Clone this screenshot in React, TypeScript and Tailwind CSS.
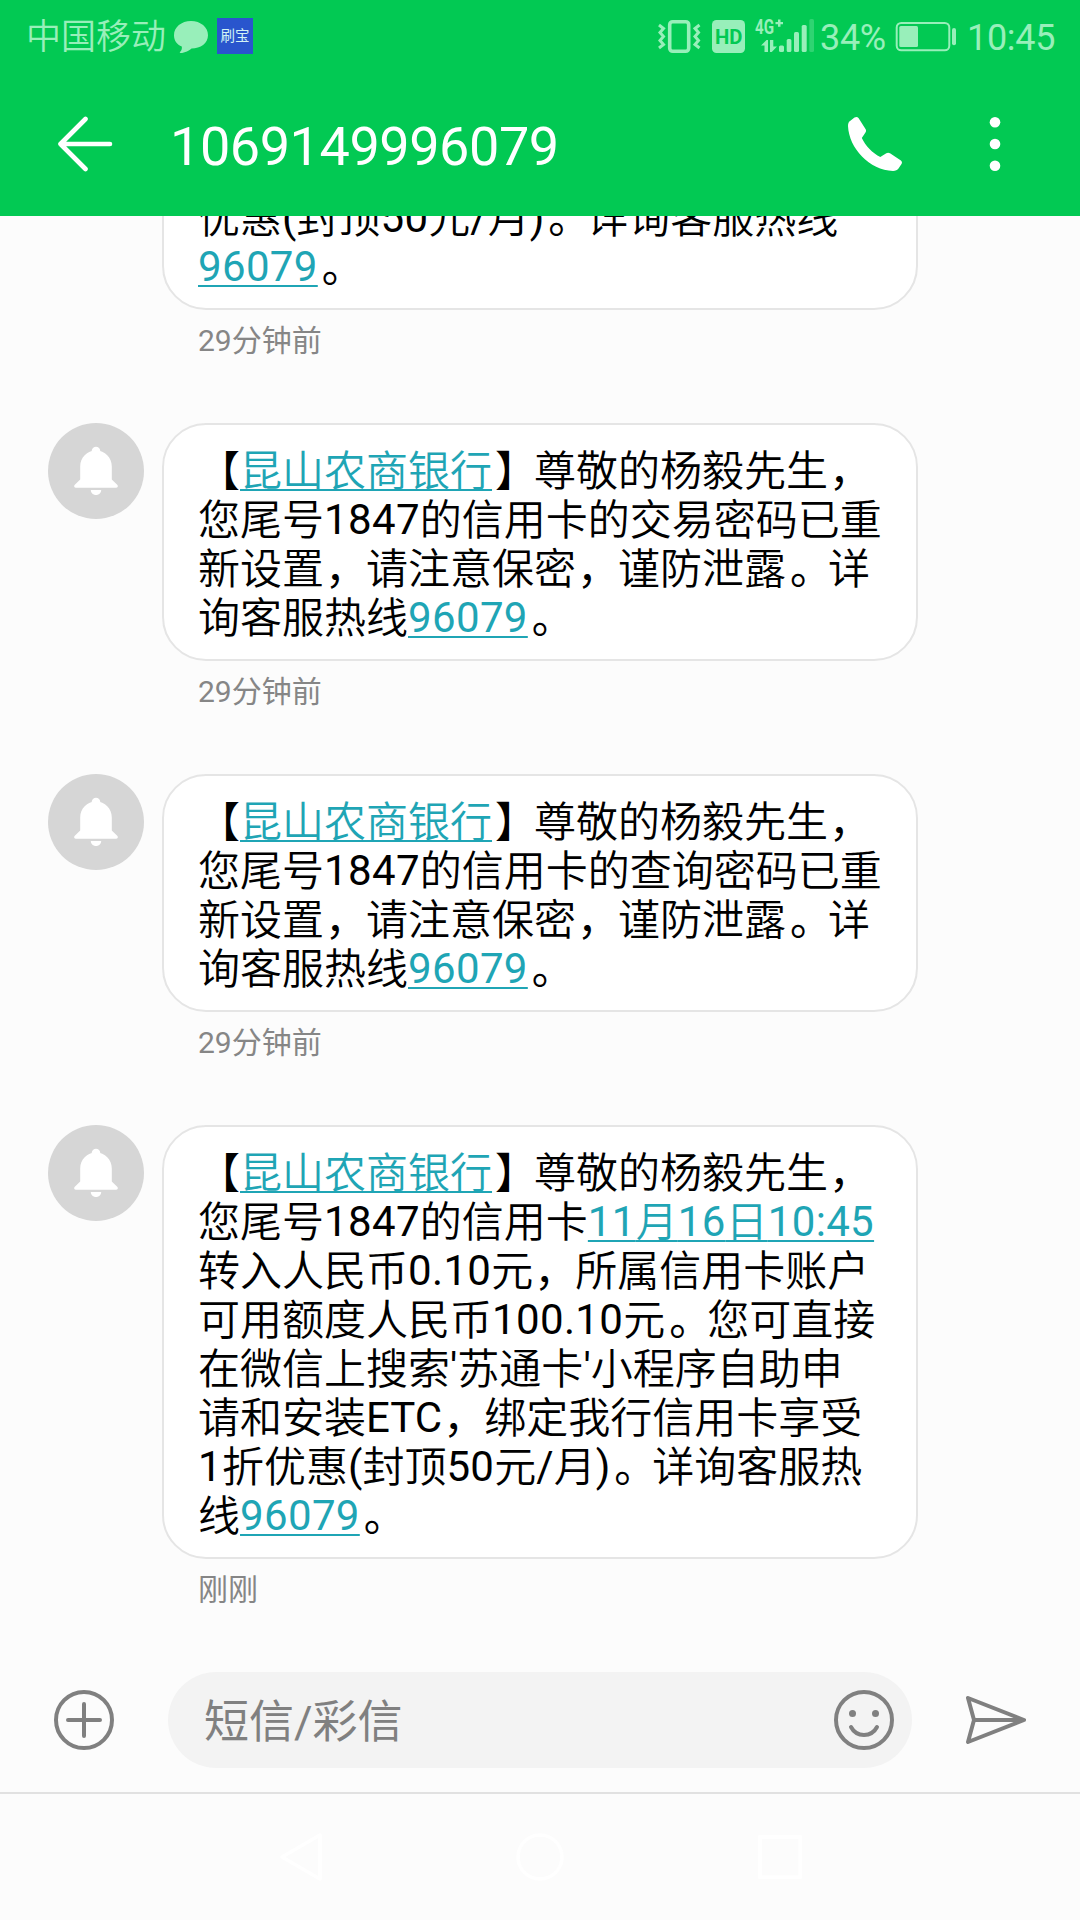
import React from "react";

type Segment = string | { link: string };
type Message = { lines: Segment[][]; time: string; avatar: boolean };

const BANK: Segment[] = ["【", { link: "昆山农商银行" }, "】尊敬的杨毅先生，"];

const MESSAGES: Message[] = [
  {
    avatar: false,
    time: "29分钟前",
    lines: [["优惠(封顶50元/月)。详询客服热线"], [{ link: "96079" }, "。"]],
  },
  {
    avatar: true,
    time: "29分钟前",
    lines: [
      BANK,
      ["您尾号1847的信用卡的交易密码已重"],
      ["新设置，请注意保密，谨防泄露。详"],
      ["询客服热线", { link: "96079" }, "。"],
    ],
  },
  {
    avatar: true,
    time: "29分钟前",
    lines: [
      BANK,
      ["您尾号1847的信用卡的查询密码已重"],
      ["新设置，请注意保密，谨防泄露。详"],
      ["询客服热线", { link: "96079" }, "。"],
    ],
  },
  {
    avatar: true,
    time: "刚刚",
    lines: [
      BANK,
      ["您尾号1847的信用卡", { link: "11月16日10:45" }],
      ["转入人民币0.10元，所属信用卡账户"],
      ["可用额度人民币100.10元。您可直接"],
      ["在微信上搜索'苏通卡'小程序自助申"],
      ["请和安装ETC，绑定我行信用卡享受"],
      ["1折优惠(封顶50元/月)。详询客服热"],
      ["线", { link: "96079" }, "。"],
    ],
  },
];

/** Splits a run so that digits, ideographs and full-width punctuation get their own spacing. */
function Run({ text }: { text: string }) {
  const parts = text.split(/([0-9.:]+|[，。】【]|[A-Z()'/]+)/).filter(Boolean);
  return (
    <>
      {parts.map((p, i) => {
        if (/^[0-9.:]+$/.test(p)) {
          return (
            <span key={i} className="tracking-[0.35px]">
              {p}
            </span>
          );
        }
        if (/^[A-Z()'/]+$/.test(p)) {
          return <React.Fragment key={i}>{p}</React.Fragment>;
        }
        if (p === "。") {
          return (
            <span key={i} className="inline-block w-[42px] pl-[4px] align-[-1px] leading-[48px]">
              {p}
            </span>
          );
        }
        if (p === "，") {
          return (
            <span key={i} className="inline-block w-[42px] pl-[1px] align-[-1px] leading-[48px]">
              {p}
            </span>
          );
        }
        if (p === "】") {
          return (
            <span key={i} className="inline-block w-[42px] pl-[3px] align-[-1px] leading-[48px]">
              {p}
            </span>
          );
        }
        return (
          <span key={i} className="align-[-1px] leading-[48px] font-[350]">
            {p}
          </span>
        );
      })}
    </>
  );
}

function Avatar() {
  return (
    <svg viewBox="0 0 96 96" className="size-24 shrink-0">
      <circle cx="48" cy="48" r="48" fill="#d6d6d6" />
      <g fill="#fff">
        <circle cx="48" cy="28" r="4.3" />
        <path d="M48 27.500c9 0 15.800 7 15.800 16V56.500l5.400 5.200c1.300 1.300.6 3-1.200 3H28c-1.800 0-2.500-1.700-1.200-3l5.400-5.200V43.500c0-9 6.800-16 15.800-16z" />
        <path d="M42.800 67h10.400c0 2.800-2.200 5-5.200 5s-5.200-2.200-5.200-5z" />
      </g>
    </svg>
  );
}

function MessageItem({ message }: { message: Message }) {
  return (
    <div className="flex shrink-0 items-start pl-12">
      <div className="w-[114px] shrink-0">{message.avatar && <Avatar />}</div>
      <div className="w-[756px]">
        <div className="rounded-[44px] border-2 border-[#e5e5e5] bg-white pt-[21px] pb-[17px] pl-[34px] text-[42px] leading-[49px] text-black">
          {message.lines.map((line, i) => (
            <div key={i} className="h-[49px] whitespace-nowrap">
              {line.map((seg, j) =>
                typeof seg === "string" ? (
                  <Run key={j} text={seg} />
                ) : (
                  <a
                    key={j}
                    className="text-[#1fa5b5] underline decoration-2 underline-offset-4 [text-decoration-skip-ink:none]"
                  >
                    <Run text={seg.link} />
                  </a>
                ),
              )}
            </div>
          ))}
        </div>
        <div className="h-[113px] pt-[13px] pl-9 text-[30px] leading-9 text-[#868686]">{message.time}</div>
      </div>
    </div>
  );
}

function StatusIcons() {
  return (
    <svg viewBox="656 0 160 72" className="h-[72px] w-[160px]" fill="#98efba">
      <g fill="none" stroke="#98efba">
        <rect x="669.700" y="21.700" width="19" height="29.600" rx="3" strokeWidth="3.600" />
        <path d="M659 25l4.500 3.500-3.500 4 3.500 4-3.500 4 3.500 4-4.500 3.500" strokeWidth="3" />
        <path d="M699.500 25l-4.500 3.500 3.500 4-3.500 4 3.500 4-3.500 4 4.500 3.500" strokeWidth="3" />
      </g>
      <rect x="712" y="20" width="33" height="33" rx="4.500" />
      <text x="715" y="44" fontSize="21" fontWeight="700" fill="#02c953" textLength="27.500" lengthAdjust="spacingAndGlyphs">
        HD
      </text>
      <text x="755" y="33.500" fontSize="20" fontWeight="700" textLength="19" lengthAdjust="spacingAndGlyphs">
        4G
      </text>
      <path d="M778 19.500h2.500v2.500h2.500v2.300h-2.500v2.500H778v-2.500h-2.500V22h2.500z" />
      <path d="M761 45.500l5.500-5.500h1.500v12h-3.500v-6.500zM770 40h3.300v6.500h3.700l-5.200 5.500H770z" />
      <rect x="779" y="45.500" width="5" height="6.500" rx="1.500" />
      <rect x="786.700" y="39" width="4.700" height="13" rx="1.500" />
      <rect x="794" y="32" width="5" height="20" rx="1.500" />
      <rect x="801.700" y="25" width="5" height="27" rx="1.500" />
      <rect x="809.300" y="19" width="4.700" height="33" rx="1.500" opacity="0.300" />
    </svg>
  );
}

function StatusBar() {
  return (
    <div className="flex h-[72px] items-start text-[36px] leading-[76px] text-[#98efba]">
      <span className="ml-[26px] w-[148px] text-[35px] font-[350]">中国移动</span>
      <svg viewBox="0 0 34 34" className="mt-5 h-[34px] w-[34px]" fill="#98efba">
        <path d="M17 1c9.600 0 17 6.200 17 14.200S26.600 28.500 17.500 28.500c-2 2-6.500 4.500-11 4.500-1-.2-1-.8-.3-1.300 1.300-1.100 2-3.200 1.600-5.200C3 24.500 0 20.500 0 15.200 0 7.200 7.400 1 17 1z" />
      </svg>
      <span className="mt-[18px] ml-[9px] size-9 bg-[#2955cd] text-center text-[14.500px] leading-[38px] text-[#d3f3f4]">刷宝</span>
      <div className="ml-[403px]">
        <StatusIcons />
      </div>
      <span className="ml-[4px] w-[75px] tracking-[-0.300px]">34%</span>
      <svg viewBox="895 0 62 72" className="h-[72px] w-[62px]" fill="#98efba">
        <rect x="896.700" y="23" width="52.600" height="27.300" rx="4.500" fill="none" stroke="#98efba" strokeWidth="2" />
        <rect x="899.300" y="26" width="18.700" height="21" rx="1.500" />
        <rect x="952" y="28" width="4" height="17.300" rx="2" />
      </svg>
      <span className="ml-[10px] tracking-[-0.300px]">10:45</span>
    </div>
  );
}

function TitleBar() {
  return (
    <div className="flex h-[144px] items-center text-white">
      <svg viewBox="0 0 56 56" className="ml-[57px] size-14" fill="none" stroke="#fff" strokeWidth="4.600" strokeLinecap="round" strokeLinejoin="round">
        <path d="M53 28H3.500M28.500 3L3.500 28l25 25" />
      </svg>
      <h1 className="ml-[57px] w-[678px] pt-[5px] text-[54px] leading-[72px] tracking-[-0.450px]">1069149996079</h1>
      <svg viewBox="0 0 54 54" className="size-[54px]" fill="#fff">
        <path d="M6.500.6c1.500-.9 3-.8 4 .5l7 10.900c.8 1.300.7 2.500-.2 3.700L13.800 21c3.500 7.500 11 15.500 18.500 19l6-3.800c1.300-.8 2.500-.7 3.700.1l10.900 7.200c1.200.9 1.400 2.100.6 3.400l-3 4.700C49.500 53.300 47.500 54 45 54 21.500 53 1 31.500 0 9c0-2.500.6-4 2-5z" />
      </svg>
      <svg viewBox="0 0 12 54" className="ml-[87px] h-[54px] w-3" fill="#fff">
        <circle cx="6" cy="5.300" r="5.300" />
        <circle cx="6" cy="27" r="5.300" />
        <circle cx="6" cy="48.700" r="5.300" />
      </svg>
    </div>
  );
}

function Composer() {
  return (
    <div className="flex h-[122px] items-start border-b-2 border-[#e1e1e1]">
      <svg viewBox="0 0 60 60" className="mt-[18px] ml-[54px] size-[60px]" fill="none" stroke="#808080" strokeWidth="4" strokeLinecap="round">
        <circle cx="30" cy="30" r="28" />
        <path d="M30 14v32M14 30h32" />
      </svg>
      <div className="ml-[54px] flex h-24 w-[744px] items-center justify-between rounded-full bg-[#f3f3f3] pr-[18px] pl-9">
        <span className="pt-[5px] text-[45px] leading-[72px] text-[#808080]">短信/彩信</span>
        <svg viewBox="0 0 60 60" className="size-[60px]" fill="none" stroke="#808080" strokeWidth="4" strokeLinecap="round">
          <circle cx="30" cy="30" r="28" />
          <path d="M17 37c5.500 10.500 20.500 10.500 26 0" />
          <circle cx="18.500" cy="23.500" r="3.500" fill="#808080" stroke="none" />
          <circle cx="41.500" cy="23.500" r="3.500" fill="#808080" stroke="none" />
        </svg>
      </div>
      <svg viewBox="0 0 60 48" className="mt-6 ml-[54px] h-12 w-[60px]" fill="none" stroke="#808080" strokeWidth="4" strokeLinecap="round" strokeLinejoin="round">
        <path d="M2 2l56 22L2 46l6-22zM8 24h50" />
      </svg>
    </div>
  );
}

function NavBar() {
  return (
    <div className="flex h-[126px] items-center justify-center gap-[192px]">
      <svg viewBox="0 0 48 48" className="size-12" fill="none" stroke="#ffffff" strokeWidth="3.500" strokeLinejoin="round">
        <path d="M44 2v44L6 24z" />
      </svg>
      <svg viewBox="0 0 48 48" className="size-12" fill="none" stroke="#ffffff" strokeWidth="3.500">
        <circle cx="24" cy="24" r="22" />
      </svg>
      <svg viewBox="0 0 48 48" className="size-12" fill="none" stroke="#ffffff" strokeWidth="3.500">
        <rect x="4" y="4" width="40" height="40" />
      </svg>
    </div>
  );
}

export default function App() {
  return (
    <div className="flex h-[1920px] w-[1080px] flex-col overflow-hidden bg-[#fcfcfc] font-[Roboto,'Noto_Sans_CJK_SC',sans-serif]">
      <header className="h-[216px] bg-[#02c953]">
        <StatusBar />
        <TitleBar />
      </header>
      <main className="flex h-[1456px] flex-col justify-end overflow-hidden">
        {MESSAGES.map((m, i) => (
          <MessageItem key={i} message={m} />
        ))}
      </main>
      <Composer />
      <NavBar />
    </div>
  );
}
